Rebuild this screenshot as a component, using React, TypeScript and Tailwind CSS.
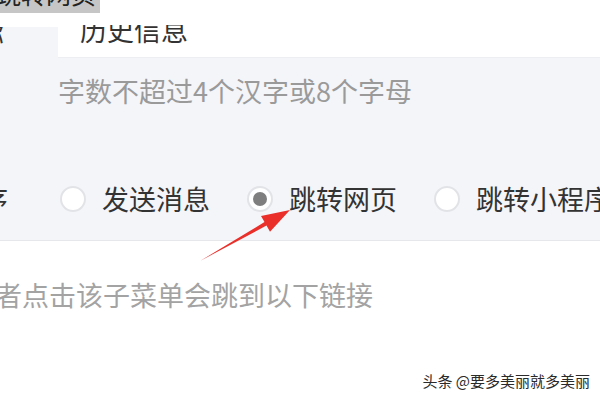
import React from 'react';

function Radio({ checked = false, label }: { checked?: boolean; label: string }) {
  return (
    <div className="flex shrink-0 items-center gap-[16px]">
      <span className="shrink-0 w-[26px] h-[26px] rounded-full border-2 border-[#e2e3e7] bg-white flex items-center justify-center">
        {checked && <span className="w-[14px] h-[14px] rounded-full bg-[#7e7e7e]" />}
      </span>
      <span className="whitespace-nowrap text-[27px] leading-[27px] text-[#333]">{label}</span>
    </div>
  );
}

export default function App() {
  return (
    <div className="relative w-[600px] h-[400px] overflow-hidden bg-white font-['Noto_Sans_CJK_SC',sans-serif]">
      {/* name row */}
      <div className="flex h-[58px]">
        <div className="w-[58px] shrink-0 flex flex-col">
          <div className="h-[27px] bg-white" />
          <div className="flex-1 bg-[#f4f5f9] overflow-hidden">
            <div className="ml-[-23px] mt-[-6px] text-[27px] leading-[27px] text-[#333]">称</div>
          </div>
        </div>
        <div className="flex-1 bg-white border-b border-[#eceef2]">
          <div className="mt-[25px] h-[32px] overflow-hidden pl-[22px]">
            <div className="mt-[-9px] whitespace-nowrap text-[27px] leading-[27px] text-[#333]">历史信息</div>
          </div>
        </div>
      </div>

      {/* rest of the grey panel */}
      <div className="h-[183px] bg-[#f4f5f9] border-b border-[#e6e7eb] pt-[19px]">
        <div className="pl-[58px] whitespace-nowrap text-[27px] leading-[27px] text-[#9a9a9a]">字数不超过4个汉字或8个字母</div>
        <div className="mt-[81px] flex items-center">
          <div className="w-[60px] shrink-0">
            <span className="block ml-[-19px] text-[27px] leading-[27px] text-[#333]">序</span>
          </div>
          <div className="flex items-center gap-[37px]">
            <Radio label="发送消息" />
            <Radio checked label="跳转网页" />
            <Radio label="跳转小程序" />
          </div>
        </div>
      </div>

      {/* link hint */}
      <div className="mt-[40px] ml-[-32px] whitespace-nowrap text-[27px] leading-[27px] text-[#a3a3a3]">
        阅者点击该子菜单会跳到以下链接
      </div>

      {/* clipped tooltip at the top-left */}
      <div className="absolute top-0 left-0 w-[100px] h-[13px] bg-[#c6c6c6] overflow-hidden">
        <div className="ml-[-4px] mt-[-20px] whitespace-nowrap text-[25px] leading-[27px] text-[#222]">跳转网页</div>
      </div>

      {/* red annotation arrow */}
      <svg className="absolute left-[195px] top-[200px]" width="100" height="70" viewBox="0 0 100 70">
        <polygon points="5,61 71.5,25.6 75,31.8 95,10 66,16 69.5,22.1" fill="#ea2f2a" />
      </svg>

      {/* watermark */}
      <div className="absolute right-[10px] bottom-[12px] whitespace-nowrap text-[15px] leading-[15px] text-[#2a2a2a] [text-shadow:0_0_2px_#fff]">
        头条 @要多美丽就多美丽
      </div>
    </div>
  );
}
